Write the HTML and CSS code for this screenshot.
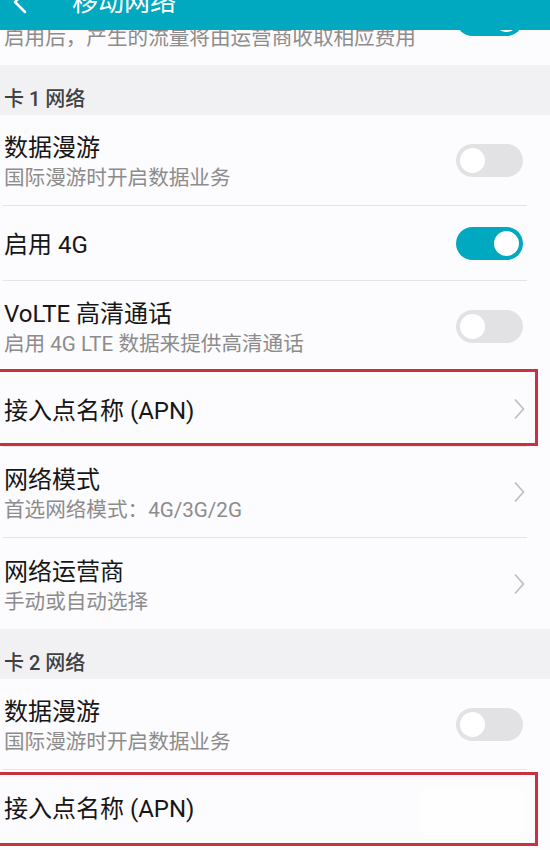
FILE: index.html
```html
<!DOCTYPE html>
<html lang="zh-CN">
<head>
<meta charset="utf-8">
<title>移动网络</title>
<link rel="stylesheet" href="styles.css">
</head>
<body>
<div class="screen">
  <header class="appbar">
    <svg class="back" width="16" height="24" viewBox="0 0 16 24"><polyline points="13,2 3,12 13,22" fill="none" stroke="#fff" stroke-width="2.5" stroke-linecap="round" stroke-linejoin="round"/></svg>
    <span class="appbar-title">移动网络</span>
  </header>
  <main class="content">
    <div class="list">
      <div class="row two no-line">
        <div class="text">
          <div class="title">移动数据</div>
          <div class="sub">启用后，产生的流量将由运营商收取相应费用</div>
        </div>
        <span class="switch on"></span>
      </div>
    </div>

    <div class="section-head">卡 1 网络</div>
    <div class="list">
      <div class="row two">
        <div class="text">
          <div class="title">数据漫游</div>
          <div class="sub">国际漫游时开启数据业务</div>
        </div>
        <span class="switch"></span>
      </div>
      <div class="row one">
        <div class="text"><div class="title">启用 4G</div></div>
        <span class="switch on"></span>
      </div>
      <div class="row two">
        <div class="text">
          <div class="title">VoLTE 高清通话</div>
          <div class="sub">启用 4G LTE 数据来提供高清通话</div>
        </div>
        <span class="switch"></span>
      </div>
      <div class="row one">
        <div class="text"><div class="title">接入点名称 (APN)</div></div>
        <svg class="chev" width="12" height="22" viewBox="0 0 12 22"><polyline points="2,1.5 10.5,11 2,20.5" fill="none" stroke="#bdbdbd" stroke-width="1.6"/></svg>
        <span class="mark mark-a"></span>
      </div>
      <div class="row two">
        <div class="text">
          <div class="title">网络模式</div>
          <div class="sub">首选网络模式：4G/3G/2G</div>
        </div>
        <svg class="chev" width="12" height="22" viewBox="0 0 12 22"><polyline points="2,1.5 10.5,11 2,20.5" fill="none" stroke="#bdbdbd" stroke-width="1.6"/></svg>
      </div>
      <div class="row two no-line">
        <div class="text">
          <div class="title">网络运营商</div>
          <div class="sub">手动或自动选择</div>
        </div>
        <svg class="chev" width="12" height="22" viewBox="0 0 12 22"><polyline points="2,1.5 10.5,11 2,20.5" fill="none" stroke="#bdbdbd" stroke-width="1.6"/></svg>
      </div>
    </div>

    <div class="section-head">卡 2 网络</div>
    <div class="list">
      <div class="row two">
        <div class="text">
          <div class="title">数据漫游</div>
          <div class="sub">国际漫游时开启数据业务</div>
        </div>
        <span class="switch"></span>
      </div>
      <div class="row one">
        <div class="text"><div class="title">接入点名称 (APN)</div></div>
        <span class="smudge"></span>
        <span class="mark mark-b"></span>
      </div>
    </div>
  </main>
</div>
</body>
</html>
```

FILE: styles.css
```css
html, body {
  margin: 0;
  padding: 0;
  background: #fcfbfd;
}

body {
  width: 550px;
  height: 850px;
  overflow: hidden;
  font-family: Roboto, "Noto Sans CJK SC", sans-serif;
}

.screen {
  position: relative;
  width: 550px;
  height: 850px;
  overflow: hidden;
}

.appbar {
  position: absolute;
  top: -26px;
  left: 0;
  right: 0;
  height: 56px;
  z-index: 5;
  background: #00a8c0;
  display: flex;
  align-items: center;
  padding-left: 12px;
  box-sizing: border-box;
}

.back {
  flex: none;
}

.appbar-title {
  margin-left: 44px;
  color: #fff;
  font-size: 26px;
  line-height: 32px;
}

.content {
  margin-top: -26px;
}

.list {
  padding: 0 23px 0 3px;
  background: #fcfbfd;
}

.section-head {
  height: 50px;
  box-sizing: border-box;
  background: #f1f0f3;
  padding: 14px 0 0 4px;
  display: flex;
  align-items: center;
  font-size: 20px;
  font-weight: 500;
  color: #404040;
}

.row {
  position: relative;
  display: flex;
  align-items: center;
  justify-content: space-between;
  padding-left: 1px;
  box-sizing: border-box;
  border-bottom: 1px solid #e4e3e6;
}

.row.two {
  height: 91px;
}

.row.one {
  height: 75px;
}

.row.no-line {
  border-bottom: none;
}

.text {
  display: flex;
  flex-direction: column;
  padding-top: 6px;
}

.row.one .text {
  padding-top: 4px;
}

.title {
  font-size: 24px;
  line-height: 30px;
  color: #161616;
}

.sub {
  font-size: 20.6px;
  line-height: 30px;
  color: #8c8c8c;
}

.switch {
  position: relative;
  flex: none;
  width: 67px;
  height: 33px;
  border-radius: 17px;
  background: #e2e1e4;
  margin-right: 4px;
}

.switch::after {
  content: "";
  position: absolute;
  top: 4px;
  left: 4px;
  width: 25px;
  height: 25px;
  border-radius: 50%;
  background: #fff;
}

.switch.on {
  background: #00a8c0;
}

.switch.on::after {
  left: 38px;
}

.chev {
  flex: none;
  margin-right: 2px;
}

.mark {
  position: absolute;
  left: -10px;
  right: -11px;
  border: 3px solid #c8323e;
  pointer-events: none;
}

.mark-a {
  top: -3px;
  bottom: 0;
}

.mark-b {
  top: 2px;
  bottom: -2px;
}

.smudge {
  position: absolute;
  right: 2px;
  top: 16px;
  width: 108px;
  height: 52px;
  background: rgba(255, 255, 255, 0.75);
  filter: blur(4px);
}
```
